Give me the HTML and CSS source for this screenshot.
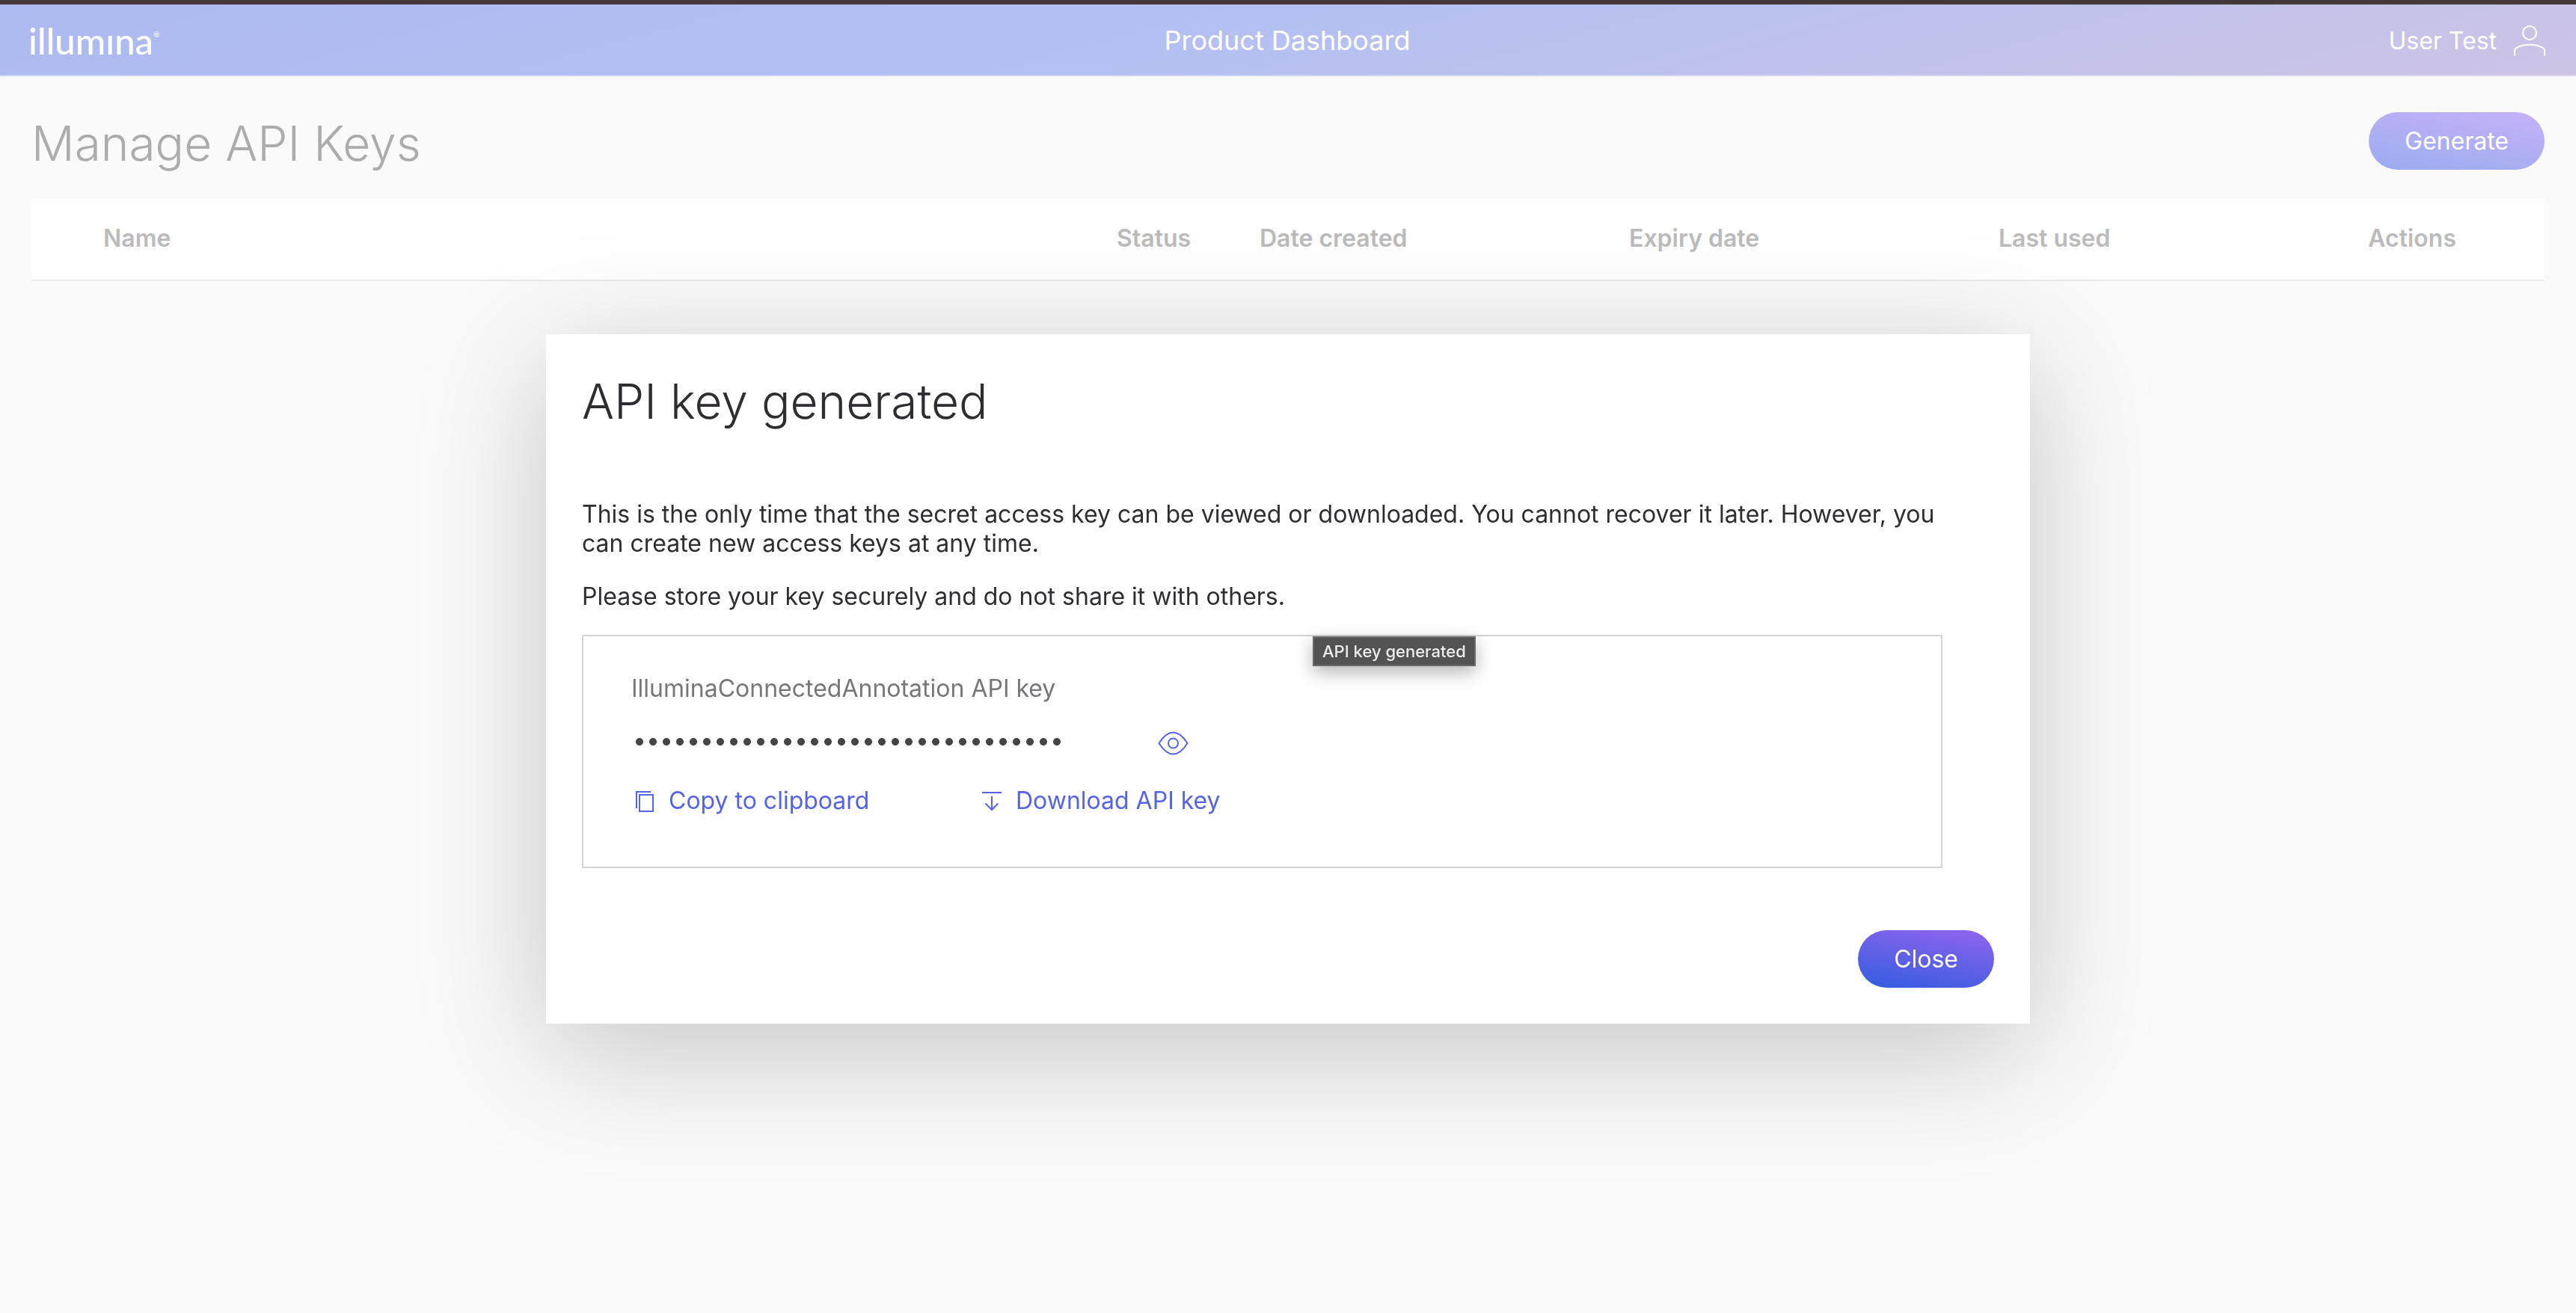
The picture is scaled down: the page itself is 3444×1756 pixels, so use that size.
FILE: index.html
```html
<!DOCTYPE html>
<html lang="en">
<head>
<meta charset="utf-8">
<title>Manage API Keys</title>
<link rel="stylesheet" href="styles.css">
</head>
<body>
<header class="topbar">
  <a class="logo" href="#" aria-label="illumina">illumına<sup class="logo-mark">®</sup></a>
  <div class="topbar-title">Product Dashboard</div>
  <button class="user" type="button">
    <span>User Test</span>
    <svg class="user-icon" viewBox="0 0 44 44" aria-hidden="true"><circle cx="22" cy="12" r="9"/><path d="M2 42.500V36c0-2 .7-3.300 2.600-4.200C10 29 16 27.800 22 27.800s12 1.200 17.400 4c1.900.9 2.600 2.200 2.600 4.200v6.500"/></svg>
  </button>
</header>
<main class="page">
  <div class="page-head">
    <h1 class="page-title">Manage API Keys</h1>
    <button class="btn btn-muted" type="button">Generate</button>
  </div>
  <table class="keys">
    <colgroup>
      <col>
      <col class="col-status">
      <col class="col-date">
      <col class="col-date">
      <col class="col-date">
      <col class="col-actions">
    </colgroup>
    <thead>
      <tr><th>Name</th><th>Status</th><th>Date created</th><th>Expiry date</th><th>Last used</th><th>Actions</th></tr>
    </thead>
  </table>
</main>
<div class="overlay">
  <section class="modal" role="dialog" aria-modal="true" aria-labelledby="modal-title">
    <h2 class="modal-title" id="modal-title">API key generated</h2>
    <div class="modal-body">
      <p>This is the only time that the secret access key can be viewed or downloaded. You cannot recover it later. However, you can create new access keys at any time.</p>
      <p>Please store your key securely and do not share it with others.</p>
      <div class="key-box">
        <label class="key-label" for="api-key">IlluminaConnectedAnnotation API key</label>
        <div class="key-row">
          <input class="key-input" id="api-key" type="password" value="00000000000000000000000000000000" readonly>
          <button class="icon-btn" type="button" aria-label="Show key">
            <svg class="eye-icon" viewBox="0 0 42 32" aria-hidden="true"><path d="M1.500 16C6.500 8 13 1.500 20.500 1.500S34.500 8 39.500 16C34.500 24 28 30.500 20.500 30.500S6.500 24 1.500 16z"/><circle cx="20.500" cy="16" r="6.500"/></svg>
          </button>
        </div>
        <div class="key-actions">
          <button class="link-btn" type="button">
            <svg class="link-icon" viewBox="0 0 30 32" aria-hidden="true"><path d="M3 26V4h19M7 8h18v22H7z"/></svg>
            Copy to clipboard
          </button>
          <button class="link-btn" type="button">
            <svg class="link-icon" viewBox="0 0 30 32" aria-hidden="true"><path d="M1 5h26M14 10v18M5.500 19.500L14 28l8.500-8.500"/></svg>
            Download API key
          </button>
        </div>
        <div class="tooltip" role="tooltip">API key generated</div>
      </div>
    </div>
    <div class="modal-foot">
      <button class="btn" type="button">Close</button>
    </div>
  </section>
</div>
</body>
</html>
```
FILE: styles.css
```css
* {
  box-sizing: border-box;
}

body {
  margin: 0;
  min-height: 100vh;
  background: #fafafa;
  color: #2f2d32;
  font-family: Inter, "Liberation Sans", sans-serif;
  font-size: 32px;
  line-height: 39px;
  font-optical-sizing: none;
}

button,
input {
  margin: 0;
  padding: 0;
  border: 0;
  background: none;
  color: inherit;
  font: inherit;
}

svg {
  display: block;
  fill: none;
  stroke: currentColor;
  stroke-width: 2;
}

.topbar {
  display: grid;
  grid-template-columns: 1fr auto 1fr;
  align-items: center;
  height: 102px;
  padding: 0 40px 0 38px;
  border-top: 6px solid #44383b;
  background: linear-gradient(165deg, #adbaf1 0%, #b4c0f2 45%, #bfc2ec 72%, #cec4e5 100%);
  box-shadow: inset 0 -2px rgba(255, 255, 255, 0.3);
  color: #fff;
}

.logo {
  display: flex;
  color: #fff;
  font-family: Lato, "Open Sans", sans-serif;
  font-size: 49px;
  font-weight: 500;
  line-height: 60px;
  text-decoration: none;
}

.logo-mark {
  font-size: 10px;
  line-height: 44px;
}

.topbar-title {
  font-size: 36px;
  line-height: 44px;
}

.user {
  display: flex;
  align-items: center;
  justify-self: end;
  gap: 22px;
}

.user-icon {
  width: 44px;
  height: 44px;
}

.page {
  padding: 48px 42px;
}

.page-head {
  display: flex;
  justify-content: space-between;
  align-items: flex-start;
  height: 115px;
}

.page-title,
.modal-title {
  margin: 0;
  font-size: 64px;
  font-weight: 300;
  line-height: 84px;
}

.page-title {
  color: #acabad;
}

.btn {
  height: 77px;
  padding: 0 48px;
  border-radius: 39px;
  background: linear-gradient(10deg, #375de0 5%, #8e64ee 95%);
  color: #fff;
}

.btn-muted {
  background: linear-gradient(10deg, #9cacf0 5%, #c4b1f8 95%);
}

.keys {
  width: 100%;
  table-layout: fixed;
  border-spacing: 0;
  background: #fff;
  color: #bbb;
}

.col-status {
  width: 191px;
}

.col-date {
  width: 494px;
}

.col-actions {
  width: 236px;
}

.keys th {
  height: 111px;
  padding: 0 0 2px;
  border-bottom: 2px solid #e9e9e9;
  font-weight: 600;
  text-align: left;
}

.keys th:first-child {
  padding-left: 96px;
}

.overlay {
  position: fixed;
  inset: 0;
  display: flex;
  justify-content: center;
  align-items: flex-start;
  padding-top: 447px;
}

.modal {
  width: 1984px;
  max-width: 100%;
  padding: 48px;
  background: #fff;
  box-shadow: 0 36px 160px rgba(0, 0, 0, 0.21);
}

.modal-body {
  padding: 89px 69px 83px 0;
}

.modal-body p {
  margin: 0 0 32px;
}

.key-box {
  position: relative;
  padding: 50px 64px 69px;
  border: 2px solid #d4d4d4;
}

.key-label {
  color: #77767a;
}

.key-row {
  display: flex;
  align-items: flex-start;
  gap: 48px;
  margin: 30px 0 33px;
}

.key-input {
  width: 656px;
  height: 39px;
  padding-left: 2px;
  color: #454347;
}

.icon-btn {
  height: 48px;
  color: #5563e8;
}

.eye-icon {
  width: 42px;
  height: 32px;
}

.key-actions {
  display: grid;
  grid-template-columns: 464px auto;
  justify-content: start;
  padding-left: 4px;
}

.link-btn {
  display: flex;
  align-items: center;
  gap: 16px;
  color: #5563e8;
}

.link-icon {
  width: 30px;
  height: 32px;
}

.tooltip {
  position: absolute;
  top: 0;
  left: 975px;
  padding: 4px 11px;
  border: 2px solid #6b6b6b;
  background: #525252;
  box-shadow: 0 8px 24px rgba(0, 0, 0, 0.3);
  color: #ececec;
  font-size: 22px;
  font-weight: 500;
  line-height: 28px;
}

.modal-foot {
  display: flex;
  justify-content: flex-end;
}
```
